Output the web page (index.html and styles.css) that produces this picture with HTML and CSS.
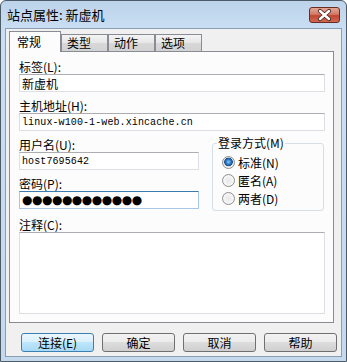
FILE: index.html
```html
<!DOCTYPE html>
<html lang="zh-CN">
  <head>
    <meta charset="UTF-8" />
    <title>站点属性</title>
    <link rel="stylesheet" href="styles.css">
  </head>
  <body>
    <div class="window">
      <div class="titlebar">
        <span class="title">站点属性: 新虚机</span>
        <span class="close">
          <svg width="31" height="16" viewBox="0 0 31 16">
            <path d="M11 4 L20 12 M20 4 L11 12" stroke="#4a2a26" stroke-width="4.2" stroke-linecap="round" fill="none" />
            <path d="M11 4 L20 12 M20 4 L11 12" stroke="#ffffff" stroke-width="2.4" stroke-linecap="round" fill="none" />
          </svg>
        </span>
      </div>

      <div class="client">
        <div class="tabs">
          <span class="tab active">常规</span>
          <span class="tab">类型</span>
          <span class="tab">动作</span>
          <span class="tab">选项</span>
        </div>

        <div class="panel">
          <div class="field first">
            <label for="label">标签(L):</label>
            <input type="text" id="label" class="cjk" value="新虚机" />
          </div>

          <div class="field">
            <label for="host">主机地址(H):</label>
            <input type="text" id="host" class="mono" value="linux-w100-1-web.xincache.cn" />
          </div>

          <div class="split">
            <div class="left">
              <div class="field">
                <label for="user">用户名(U):</label>
                <input type="text" id="user" class="mono" value="host7695642" />
              </div>
              <div class="field">
                <label for="pass">密码(P):</label>
                <input type="text" id="pass" class="dots focus" value="●●●●●●●●●●●●" />
              </div>
            </div>

            <fieldset class="group">
              <legend>登录方式(M)</legend>
              <div class="radio-row"><span class="radio checked"></span>标准(N)</div>
              <div class="radio-row"><span class="radio"></span>匿名(A)</div>
              <div class="radio-row"><span class="radio"></span>两者(D)</div>
            </fieldset>
          </div>

          <div class="field">
            <label for="note">注释(C):</label>
            <textarea id="note"></textarea>
          </div>
        </div>

        <div class="buttons">
          <button class="default">连接(E)</button>
          <button>确定</button>
          <button>取消</button>
          <button>帮助</button>
        </div>
      </div>
    </div>
  </body>
</html>
```

FILE: styles.css
```css
* {
  box-sizing: border-box;
}
body {
  margin: 0;
  font-family: "Noto Sans CJK SC", "Liberation Sans", sans-serif;
  font-size: 12px;
  color: #000;
  background: #ffffff;
}
.window {
  width: 347px;
  height: 362px;
  border: 1px solid #4d5a68;
  border-radius: 6px 6px 0 0;
  background: linear-gradient(#bdd3ea, #cadff3 30px, #c4d9ee);
  display: flex;
  flex-direction: column;
}
.titlebar {
  height: 27px;
  display: flex;
  align-items: center;
  justify-content: space-between;
  padding: 0 6px 0 6px;
}
.title {
  font-size: 13px;
  line-height: 16px;
  color: #000;
}
.close {
  width: 31px;
  height: 16px;
  border: 1px solid #6b2a22;
  border-radius: 3px;
  background: linear-gradient(#e4a595, #d27a68 45%, #c2452f 55%, #d06a52);
  display: flex;
}
.close svg {
  margin: -1px;
}
.client {
  flex: 1;
  margin: 0 4px 4px 4px;
  border: 1px solid #8b9db3;
  background: #f0f0f0;
  padding: 2px 0 0 3px;
}
.tabs {
  display: flex;
  align-items: flex-end;
  height: 20px;
}
.tab {
  width: 47px;
  height: 17px;
  border: 1px solid #898c95;
  border-bottom: none;
  background: linear-gradient(#f4f4f4, #e6e6e6 50%, #d8d8d8 50%, #d2d2d2);
  padding-left: 5px;
  line-height: 16px;
}
.tab.active {
  width: 52px;
  height: 21px;
  margin-bottom: -1px;
  background: #fcfcfc;
  padding-left: 7px;
  line-height: 19px;
  position: relative;
  z-index: 1;
}
.panel {
  width: 325px;
  height: 272px;
  border: 1px solid #898c95;
  background: #fcfcfc;
  padding: 1px 8px 0 9px;
}
.field {
  margin-top: 7px;
}
label {
  display: block;
  height: 14px;
  line-height: 14px;
}
input,
textarea {
  display: block;
  width: 306px;
  height: 18px;
  margin: 0;
  padding: 0 2px;
  border: 1px solid #dcdfe4;
  border-top-color: #abadb3;
  background: #ffffff;
  color: #000;
  outline: none;
}
.cjk {
  font-family: "Noto Sans CJK SC", sans-serif;
  font-size: 12px;
}
.mono {
  font-family: "Liberation Mono", monospace;
  font-size: 10px;
  letter-spacing: 0.1px;
}
.dots {
  font-family: "DejaVu Sans", sans-serif;
  font-size: 12px;
  letter-spacing: -0.5px;
}
.focus {
  border-color: #a6c8e6;
  border-top-color: #3d7bad;
}
textarea {
  height: 82px;
  resize: none;
}
.split {
  display: flex;
}
.left input {
  width: 180px;
}
.group {
  margin: 5px 0 0 13px;
  padding: 3px 0 0 9px;
  width: 112px;
  height: 75px;
  border: 1px solid #d5dfe5;
  border-radius: 3px;
}
.group legend {
  padding: 0 1px;
  margin-left: -5px;
  line-height: 14px;
}
.radio-row {
  display: flex;
  align-items: center;
  height: 18px;
}
.radio {
  width: 13px;
  height: 13px;
  border-radius: 50%;
  border: 1px solid #8e8f8f;
  background: radial-gradient(circle at 50% 50%, #e8e8e8, #f6f6f6 5px, #dcdcdc);
  margin-right: 3px;
}
.radio.checked {
  background: radial-gradient(circle at 50% 45%, #8ecbf5 0, #2a78c8 2.5px, #1a4f86 4px, #e4e4e4 4.6px, #f6f6f6 6px);
}
.buttons {
  display: flex;
  gap: 8px;
  padding: 10px 0 0 12px;
}
button {
  width: 73px;
  height: 19px;
  border: 1px solid #707070;
  border-radius: 3px;
  background: linear-gradient(#f2f2f2, #ebebeb 50%, #dddddd 50%, #cfcfcf);
  font-family: "Noto Sans CJK SC", sans-serif;
  font-size: 12px;
  line-height: 15px;
  padding: 0;
  color: #000;
}
button.default {
  border-color: #3c7fb1;
  background: linear-gradient(#eaf6fd, #d9f0fc 50%, #bee6fd 50%, #a7d9f5);
}
```
